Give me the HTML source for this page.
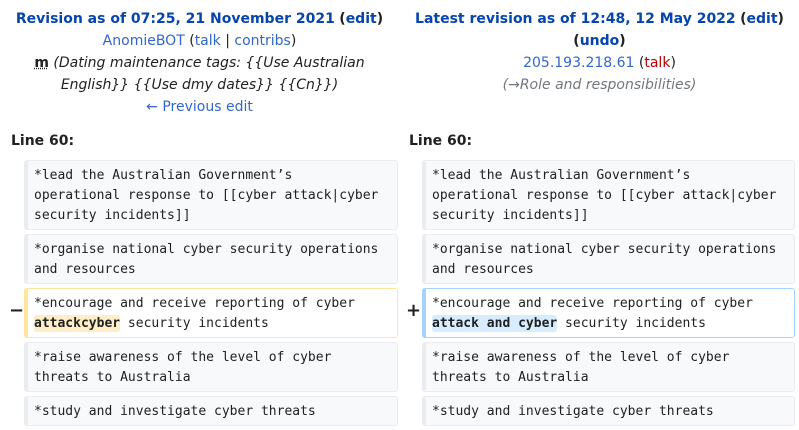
<!DOCTYPE html>
<html><head><meta charset="utf-8"><style>
body{margin:0;background:#fff;font-family:"DejaVu Sans","Liberation Sans",sans-serif;font-size:14px;color:#202122;width:799px;height:430px;overflow:hidden;position:relative}
a{color:#3366cc;text-decoration:none}
.col{position:absolute;top:8px;width:399px;text-align:center;line-height:22px}
.b{font-weight:bold;color:#0645ad}
.b a{color:#0645ad}
i{color:#202122}
.ln{position:absolute;top:131px;font-weight:bold;line-height:20px}
.box{position:absolute;box-sizing:border-box;border:1px solid #eaecf0;border-left:4px solid #eaecf0;border-radius:3px;background:#f8f9fa;font-family:"DejaVu Sans Mono","Liberation Mono",monospace;font-size:13px;line-height:20px;padding:5px 5px 3px 6px;white-space:pre}
.del{background:#fff;border-color:#ffe49c}
.add{background:#fff;border-color:#a3d3ff}
.hd{background:#feeec8;font-weight:bold;border-radius:3px;padding:1px 0}
.ha{background:#d8ecff;font-weight:bold;border-radius:3px;padding:1px 0}
.mk{position:absolute;font-weight:bold;font-size:18px}
</style></head><body>
<div class="col" style="left:0">
<div><span class="b"><a>Revision as of 07:25, 21 November 2021</a></span> <b>(<a class="b">edit</a>)</b></div>
<div><a>AnomieBOT</a> (<a>talk</a> | <a>contribs</a>)</div>
<div><b style="text-decoration:underline dotted">m</b> <i>(Dating maintenance tags: {{Use Australian<br>English}} {{Use dmy dates}} {{Cn}})</i></div>
<div><a>← Previous edit</a></div>
</div>
<div class="col" style="left:400px">
<div><span class="b"><a>Latest revision as of 12:48, 12 May 2022</a></span> <b>(<a class="b">edit</a>)</b></div>
<div><b>(<a class="b">undo</a>)</b></div>
<div><a>205.193.218.61</a> (<a style="color:#ba0000">talk</a>)</div>
<div><i style="color:#72777d">(→Role and responsibilities)</i></div>
</div>
<div class="ln" style="left:11px">Line 60:</div>
<div class="ln" style="left:409px">Line 60:</div>

<div class="box" style="left:24px;top:160px;width:374px;height:70px">*lead the Australian Government’s
operational response to [[cyber attack|cyber
security incidents]]</div>
<div class="box" style="left:24px;top:234px;width:374px;height:50px">*organise national cyber security operations
and resources</div>
<div class="mk" style="left:9px;top:300px">−</div>
<div class="box del" style="left:24px;top:288px;width:374px;height:50px">*encourage and receive reporting of cyber
<span class="hd">attackcyber</span> security incidents</div>
<div class="box" style="left:24px;top:342px;width:374px;height:50px">*raise awareness of the level of cyber
threats to Australia</div>
<div class="box" style="left:24px;top:396px;width:374px;height:30px">*study and investigate cyber threats</div>

<div class="box" style="left:422px;top:160px;width:373px;height:70px">*lead the Australian Government’s
operational response to [[cyber attack|cyber
security incidents]]</div>
<div class="box" style="left:422px;top:234px;width:373px;height:50px">*organise national cyber security operations
and resources</div>
<div class="mk" style="left:406px;top:300px">+</div>
<div class="box add" style="left:422px;top:288px;width:373px;height:50px">*encourage and receive reporting of cyber
<span class="ha">attack and cyber</span> security incidents</div>
<div class="box" style="left:422px;top:342px;width:373px;height:50px">*raise awareness of the level of cyber
threats to Australia</div>
<div class="box" style="left:422px;top:396px;width:373px;height:30px">*study and investigate cyber threats</div>
</body></html>
